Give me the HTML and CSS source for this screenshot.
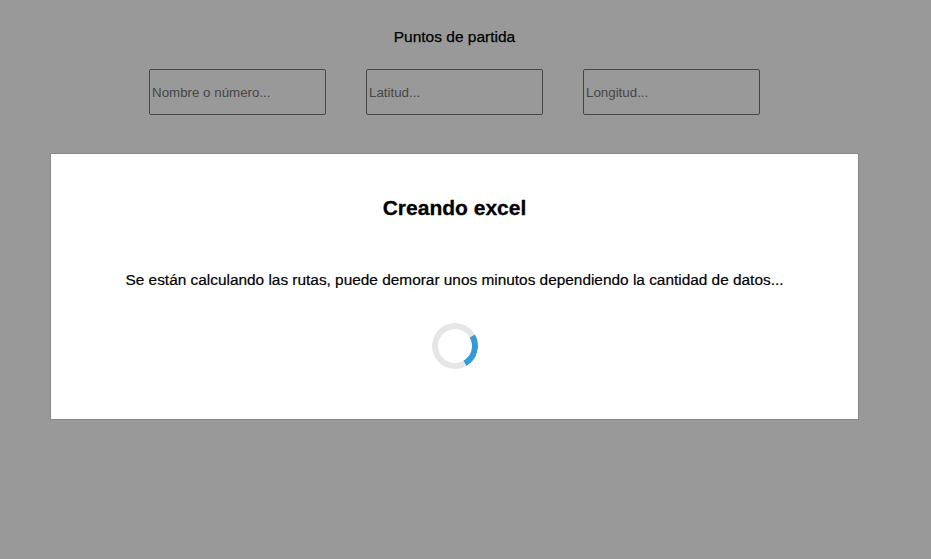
FILE: index.html
```html
<!DOCTYPE html>
<html lang="es">
<head>
<meta charset="utf-8">
<title>Puntos de partida</title>
<link rel="stylesheet" href="styles.css">
</head>
<body>
<main class="page">
  <h3 class="section-title">Puntos de partida</h3>
  <div class="fields">
    <input class="field" type="text" placeholder="Nombre o número...">
    <input class="field" type="text" placeholder="Latitud...">
    <input class="field" type="text" placeholder="Longitud...">
  </div>
</main>
<div class="overlay">
  <div class="modal">
    <h2 class="modal-title">Creando excel</h2>
    <p class="modal-text">Se están calculando las rutas, puede demorar unos minutos dependiendo la cantidad de datos...</p>
    <div class="spinner"></div>
  </div>
</div>
</body>
</html>
```

FILE: styles.css
```css
html, body {
  margin: 0;
  padding: 0;
  background: #ffffff;
  font-family: "Liberation Sans", Arial, sans-serif;
}

.page {
  width: 909px;
  display: flex;
  flex-direction: column;
  align-items: center;
}

.section-title {
  margin: 28px 0 0;
  font-size: 15.5px;
  font-weight: normal;
  line-height: 18px;
  color: #000;
  -webkit-text-stroke: 0.25px #000;
}

.fields {
  display: flex;
  gap: 40px;
  margin-top: 23px;
}

.field {
  box-sizing: border-box;
  width: 177px;
  height: 46px;
  border: 1px solid #767676;
  border-radius: 2px;
  padding: 1px 2px;
  font-family: "Liberation Sans", Arial, sans-serif;
  font-size: 13.33px;
  background: #fff;
}

.field::placeholder {
  color: #757575;
}

.overlay {
  position: fixed;
  inset: 0;
  background: rgba(0, 0, 0, 0.4);
  display: flex;
  flex-direction: column;
  align-items: flex-start;
}

.modal {
  box-sizing: border-box;
  width: 809px;
  height: 267px;
  margin: 153px 0 0 50px;
  background: #fff;
  border: 1px solid #888;
  display: flex;
  flex-direction: column;
  align-items: center;
}

.modal-title {
  margin: 42px 0 0;
  font-size: 21px;
  line-height: 24px;
  font-weight: bold;
  color: #000;
  -webkit-text-stroke: 0.3px #000;
}

.modal-text {
  margin: 51px 0 0;
  font-size: 15.4px;
  line-height: 18px;
  color: #000;
  -webkit-text-stroke: 0.2px #000;
}

.spinner {
  box-sizing: border-box;
  width: 46px;
  height: 46px;
  margin-top: 34px;
  border: 6px solid #e6e6e6;
  border-right-color: #3498db;
  border-radius: 50%;
  transform: rotate(15deg);
}
```
